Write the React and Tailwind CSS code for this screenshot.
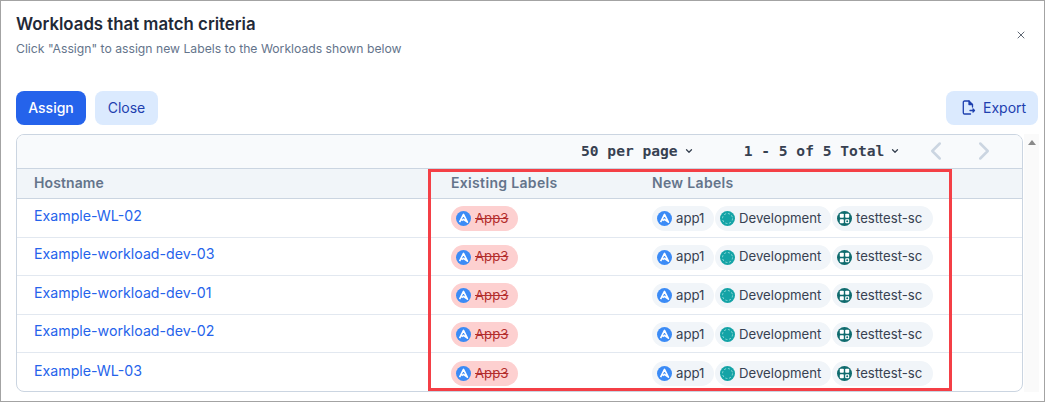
import { ChevronLeft, ChevronRight, ChevronDown, X } from 'lucide-react'

const rows = ['Example-WL-02', 'Example-workload-dev-03', 'Example-workload-dev-01', 'Example-workload-dev-02', 'Example-WL-03']

function AppIcon() {
  return (
    <svg width="15" height="15" viewBox="0 0 15 15" className="shrink-0">
      <circle cx="7.5" cy="7.5" r="7.5" fill="#3b8bf6" />
      <path d="M3.6 11.2 7.5 3.4 11.4 11.2 7.5 8.4 5.6 9.6" fill="none" stroke="#fff" strokeWidth="1.6" strokeLinejoin="round" />
    </svg>
  )
}

function EnvIcon() {
  return (
    <svg width="15" height="15" viewBox="0 0 15 15" className="shrink-0">
      <circle cx="7.5" cy="7.5" r="7.5" fill="#14a3a6" />
      <circle cx="7.5" cy="7.5" r="5" fill="none" stroke="#8edad8" strokeWidth="1" strokeDasharray="2 1.9" />
    </svg>
  )
}

function ScopeIcon() {
  return (
    <svg width="15" height="15" viewBox="0 0 15 15" className="shrink-0">
      <circle cx="7.5" cy="7.5" r="7.5" fill="#0f6b6e" />
      <rect x="2.8" y="2.8" width="4" height="4" rx="0.8" fill="#fff" />
      <rect x="8.2" y="2.8" width="4" height="4" rx="0.8" fill="#fff" />
      <rect x="2.8" y="8.2" width="4" height="4" rx="0.8" fill="#fff" />
      <rect x="8.2" y="8.2" width="4" height="4" rx="0.8" fill="#fff" />
      <circle cx="10.2" cy="10.2" r="1" fill="#0f6b6e" />
    </svg>
  )
}

function ExportIcon() {
  return (
    <svg width="15" height="15" viewBox="0 0 15 15" fill="none" stroke="#1e40af" strokeWidth="1.3" strokeLinejoin="round" strokeLinecap="round">
      <path d="M9.5 14H3.5a1.2 1.2 0 0 1-1.2-1.2V2.2A1.2 1.2 0 0 1 3.5 1H8l3.5 3.5V7" />
      <path d="M8 1v3.5h3.5" fill="#1e40af" />
      <path d="M9 10.5h4.5M12 9l1.5 1.5L12 12" />
    </svg>
  )
}

function Chip({ icon, children, className }) {
  return (
    <span className={`flex h-[25px] items-center gap-1 rounded-full pl-[5px] text-[13.2px] ${className}`}>
      {icon}
      {children}
    </span>
  )
}

export default function App() {
  return (
    <div className="relative h-[402px] w-[1045px] overflow-hidden border border-[#a3a3a3] bg-white font-['Inter',sans-serif]">
      <div className="flex items-start justify-between px-[15px] pt-[13px]">
        <div>
          <h2 className="text-[16.8px] font-semibold leading-[20px] text-[#1f2937]">Workloads that match criteria</h2>
          <p className="mt-[6px] text-[12.2px] leading-[18px] text-[#64748b]">Click "Assign" to assign new Labels to the Workloads shown below</p>
        </div>
        <X size={12} strokeWidth={1.6} className="mr-[2px] mt-[15px] text-[#374151]" />
      </div>

      <div className="mt-[33px] flex items-center gap-[9px] pl-[15px] pr-[6px]">
        <button className="h-[34px] w-[70px] rounded-lg bg-[#2563eb] pb-px text-[14px] font-medium text-white">Assign</button>
        <button className="h-[34px] w-[63px] rounded-lg bg-[#dbeafe] pb-px text-[14px] text-[#1e40af]">Close</button>
        <button className="ml-auto flex h-[34px] w-[92px] items-center gap-[7px] rounded-lg bg-[#dbeafe] pb-px pl-[15px] text-[14px] text-[#1e40af]">
          <ExportIcon />
          Export
        </button>
      </div>

      <div className="mt-[9px] flex pl-[15px]">
        <div className="h-[258px] w-[1007px] overflow-hidden rounded-lg border border-[#cbd5e1]">
          <div className="flex h-[34px] items-center border-b border-[#cbd5e1] bg-[#f8fafc] pb-[2px] font-['DejaVu_Sans_Mono',monospace] text-[14.6px] font-bold text-[#374151]">
            <span className="ml-[564px]">50 per page</span>
            <ChevronDown size={10} strokeWidth={3} className="ml-[6px]" />
            <span className="ml-[50px]">1 - 5 of 5 Total</span>
            <ChevronDown size={10} strokeWidth={3} className="ml-[6px]" />
            <ChevronLeft size={30} strokeWidth={2} className="ml-[21px] text-[#cbd5e1]" />
            <ChevronRight size={30} strokeWidth={2} className="ml-[18px] text-[#cbd5e1]" />
          </div>
          <div className="grid h-[30px] grid-cols-[434px_201px_1fr] items-center border-b border-[#cbd5e1] bg-[#f1f5f9] pb-[2px] text-[14px] font-semibold tracking-[0.33px] text-[#64748b]">
            <span className="pl-[17px] tracking-[0.1px]">Hostname</span>
            <span>Existing Labels</span>
            <span>New Labels</span>
          </div>
          {rows.map((name, i) => (
            <div key={name} className={`grid h-[38.6px] grid-cols-[434px_201px_1fr] items-center ${i < rows.length - 1 ? 'border-b border-[#e2e8f0]' : ''}`}>
              <a className="pb-[5px] pl-[17px] text-[14.2px] text-[#2563eb]">{name}</a>
              <div className="flex pt-[2px]">
                <Chip icon={<AppIcon />} className="w-[67px] bg-[#fdd0d0] text-[#b32d2d] line-through">App3</Chip>
              </div>
              <div className="flex gap-px pt-[2px] text-[#374151]">
                <Chip icon={<AppIcon />} className="w-[62px] bg-[#f1f5f9]">app1</Chip>
                <Chip icon={<EnvIcon />} className="w-[116px] bg-[#f1f5f9]">Development</Chip>
                <Chip icon={<ScopeIcon />} className="w-[101px] bg-[#f1f5f9]">testtest-sc</Chip>
              </div>
            </div>
          ))}
        </div>
        <div className="ml-px h-[258px] w-[15px] bg-[#fafafa] pt-[6px]">
          <div className="mx-auto h-0 w-0 border-x-[4.5px] border-b-[5px] border-x-transparent border-b-[#8a8a8a]" />
        </div>
      </div>

      <div className="pointer-events-none absolute left-[427px] top-[168px] h-[222px] w-[524px] border-[3px] border-[#f43f46]" />
    </div>
  )
}
